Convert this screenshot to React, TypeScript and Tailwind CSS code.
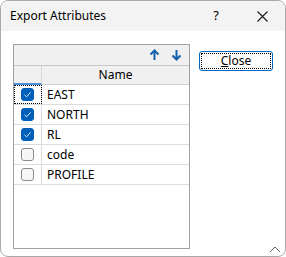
import React, { useState } from "react";

const rowsData = [
  { name: "EAST", checked: true },
  { name: "NORTH", checked: true },
  { name: "RL", checked: true },
  { name: "code", checked: false },
  { name: "PROFILE", checked: false },
];

const CheckBox = ({ checked, onClick }: { checked: boolean; onClick: () => void }) => (
  <button
    onClick={onClick}
    className={`flex h-[13px] w-[13px] items-center justify-center rounded-[3px] border ${
      checked ? "border-[#005fb8] bg-[#005fb8]" : "border-[#8a8a8a] bg-[#f6f6f6]"
    }`}
  >
    {checked && (
      <svg width="9" height="9" viewBox="0 0 9 9">
        <path d="M1.5 4.8 L3.6 6.8 L7.6 2.3" fill="none" stroke="white" strokeWidth="0.9" />
      </svg>
    )}
  </button>
);

export default function App() {
  const [rows, setRows] = useState(rowsData);

  const toggle = (i: number) =>
    setRows((r) => r.map((x, j) => (j === i ? { ...x, checked: !x.checked } : x)));

  return (
    <div
      className="flex h-[257px] w-[286px] flex-col overflow-hidden rounded-[8px] border border-[#a9a9a9] bg-white text-[12px] text-black"
      style={{ fontFamily: '"Segoe UI", "Noto Sans", "Open Sans", sans-serif' }}
    >
      {/* title bar */}
      <div className="flex h-[30px] items-center bg-[#f3f3f3] pl-[9px]">
        <span className="flex-1 text-[12px] leading-none">Export Attributes</span>
        <span className="w-[46px] text-center text-[13px]">?</span>
        <span className="flex w-[46px] items-center justify-center">
          <svg width="11" height="11" viewBox="0 0 11 11">
            <path d="M0.5 0.5 L10.5 10.5 M10.5 0.5 L0.5 10.5" stroke="#1a1a1a" strokeWidth="1.1" />
          </svg>
        </span>
      </div>

      <div className="relative flex flex-1 pl-[12px] pt-[13px]">
        {/* grid */}
        <div className="flex h-[205px] w-[177px] flex-col border border-[#a0a0a0] bg-white">
          <div className="flex h-[21px] items-center justify-end gap-[11px] border-b border-[#c8c8c8] bg-[#f0f0f0] pr-[7px]">
            <svg width="11" height="12" viewBox="0 0 11 12">
              <path d="M5.5 11 V1.5 M1.5 5.5 L5.5 1.5 L9.5 5.5" fill="none" stroke="#1660b0" strokeWidth="2" />
            </svg>
            <svg width="11" height="12" viewBox="0 0 11 12">
              <path d="M5.5 1 V10.5 M1.5 6.5 L5.5 10.5 L9.5 6.5" fill="none" stroke="#1660b0" strokeWidth="2" />
            </svg>
          </div>
          <div className="flex h-[19px] bg-[#f0f0f0]">
            <div className="w-[28px] border-r border-b-2 border-r-[#d8d8d8] border-b-[#4a90d9]" />
            <div className="flex flex-1 items-center justify-center border-b border-[#d0d0d0]">Name</div>
          </div>
          {rows.map((r, i) => (
            <div key={r.name} className="flex h-[20px] border-b border-[#dcdcdc]">
              <div
                className={`flex w-[28px] items-center justify-center border-r border-[#dcdcdc] ${
                  i === 0 ? "outline-1 -outline-offset-1 outline-dotted outline-black" : ""
                }`}
              >
                <CheckBox checked={r.checked} onClick={() => toggle(i)} />
              </div>
              <div className="flex flex-1 items-center pl-[5px]">{r.name}</div>
            </div>
          ))}
        </div>

        {/* close button */}
        <div className="ml-[9px] mt-[7px]">
          <button className="flex h-[20px] w-[74px] items-center justify-center rounded-[3px] border border-[#0067c0] bg-[#fdfdfd] p-[1px]">
            <span className="flex h-full w-full items-center justify-center border border-dotted border-black">
              <span className="underline decoration-1 underline-offset-1">C</span>lose
            </span>
          </button>
        </div>

        {/* resize grip */}
        <svg className="absolute bottom-[3px] right-[4px]" width="12" height="8" viewBox="0 0 12 8">
          <path d="M1 7 L6 2 L11 7" fill="none" stroke="#606060" strokeWidth="1" />
        </svg>
      </div>
    </div>
  );
}
